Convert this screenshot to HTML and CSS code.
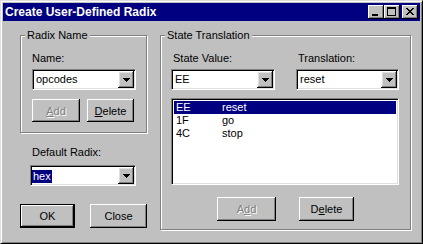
FILE: index.html
```html
<!DOCTYPE html>
<html lang="en">

<head>
    <meta charset="UTF-8">
    <meta name="viewport" content="width=device-width, initial-scale=1.0">
    <title>Create User-Defined Radix</title>
    <link rel="stylesheet" href="styles.css">
</head>

<body>
    <div class="window">
        <div class="titlebar">
            <span class="title">Create User-Defined Radix</span>
            <div class="controls">
                <span class="ctl">
                    <svg width="16" height="14" viewBox="0 0 16 14" shape-rendering="crispEdges"><path d="M4 9h6v2H4z" fill="#000"/></svg>
                </span>
                <span class="ctl">
                    <svg width="16" height="14" viewBox="0 0 16 14" shape-rendering="crispEdges"><path d="M3 2h9v9H3z M4 4v6h7V4z" fill="#000" fill-rule="evenodd"/></svg>
                </span>
                <span class="ctl ctl-close">
                    <svg width="16" height="14" viewBox="0 0 16 14" shape-rendering="crispEdges"><path d="M4 3h2v1H4z M10 3h2v1h-2z M5 4h2v1H5z M9 4h2v1H9z M6 5h4v1H6z M7 6h2v1H7z M6 7h4v1H6z M5 8h2v1H5z M9 8h2v1H9z M4 9h2v1H4z M10 9h2v1h-2z" fill="#000"/></svg>
                </span>
            </div>
        </div>

        <div class="content">
            <div class="left-col">
                <div class="group radix-group">
                    <span class="legend">Radix Name</span>
                    <label class="lbl">Name:</label>
                    <div class="combo name-combo">
                        <span class="combo-text">opcodes</span>
                        <span class="drop"><svg width="7" height="4" viewBox="0 0 7 4" shape-rendering="crispEdges"><path d="M0 0h7v1H0z M1 1h5v1H1z M2 2h3v1H2z M3 3h1v1H3z" fill="#000"/></svg></span>
                    </div>
                    <div class="btn-row">
                        <button class="btn btn-add disabled"><u>A</u>dd</button>
                        <button class="btn btn-del"><u>D</u>elete</button>
                    </div>
                </div>

                <label class="lbl default-lbl">Default Radix:</label>
                <div class="combo hex-combo">
                    <span class="combo-text"><span class="sel">hex</span></span>
                    <span class="drop"><svg width="7" height="4" viewBox="0 0 7 4" shape-rendering="crispEdges"><path d="M0 0h7v1H0z M1 1h5v1H1z M2 2h3v1H2z M3 3h1v1H3z" fill="#000"/></svg></span>
                </div>

                <div class="btn-row main-btns">
                    <button class="btn btn-ok default">OK</button>
                    <button class="btn btn-close">Close</button>
                </div>
            </div>

            <div class="group state-group">
                <span class="legend">State Translation</span>
                <div class="field-row">
                    <div class="field">
                        <label class="lbl">State Value:</label>
                        <div class="combo sv-combo">
                            <span class="combo-text">EE</span>
                            <span class="drop"><svg width="7" height="4" viewBox="0 0 7 4" shape-rendering="crispEdges"><path d="M0 0h7v1H0z M1 1h5v1H1z M2 2h3v1H2z M3 3h1v1H3z" fill="#000"/></svg></span>
                        </div>
                    </div>
                    <div class="field">
                        <label class="lbl">Translation:</label>
                        <div class="combo tr-combo">
                            <span class="combo-text">reset</span>
                            <span class="drop"><svg width="7" height="4" viewBox="0 0 7 4" shape-rendering="crispEdges"><path d="M0 0h7v1H0z M1 1h5v1H1z M2 2h3v1H2z M3 3h1v1H3z" fill="#000"/></svg></span>
                        </div>
                    </div>
                </div>

                <div class="listbox">
                    <div class="row selected"><span class="col1">EE</span><span>reset</span></div>
                    <div class="row"><span class="col1">1F</span><span>go</span></div>
                    <div class="row"><span class="col1">4C</span><span>stop</span></div>
                </div>

                <div class="btn-row state-btns">
                    <button class="btn btn-add2 disabled">A<u>d</u>d</button>
                    <button class="btn btn-del2">D<u>e</u>lete</button>
                </div>
            </div>
        </div>
    </div>
</body>

</html>
```

FILE: styles.css
```css
* {
    box-sizing: border-box;
}

body {
    margin: 0;
    background: #c0c0c0;
    font-family: "Liberation Sans", Arial, sans-serif;
    font-size: 11px;
    color: #000;
}

.window {
    width: 423px;
    height: 244px;
    padding: 2px;
    background: #c0c0c0;
    border: 1px solid;
    border-color: #dfdfdf #000 #000 #dfdfdf;
    box-shadow: inset 1px 1px #fff, inset -1px -1px #808080;
}

/* title bar */
.titlebar {
    display: flex;
    align-items: center;
    height: 18px;
    padding: 0 2px;
    background: #000080;
    color: #fff;
}

.title {
    flex: 1;
    font-size: 12px;
    font-weight: bold;
}

.controls {
    display: flex;
}

.ctl {
    display: block;
    width: 16px;
    height: 14px;
    background: #c0c0c0;
    box-shadow: inset -1px -1px #000, inset 1px 1px #fff, inset -2px -2px #808080;
}

.ctl svg {
    display: block;
}

.ctl-close {
    margin-left: 2px;
}

/* body */
.content {
    display: flex;
    gap: 12px;
    padding: 14px 0 0 17px;
}

.left-col {
    display: flex;
    flex-direction: column;
    width: 128px;
}

.group {
    position: relative;
    display: flex;
    flex-direction: column;
    border: 1px solid #808080;
    box-shadow: inset 1px 1px #fff, 1px 1px #fff;
}

.legend {
    position: absolute;
    top: -7px;
    left: 4px;
    padding: 0 2px;
    line-height: 13px;
    background: #c0c0c0;
}

.lbl {
    display: block;
    line-height: 13px;
}

.radix-group {
    width: 127px;
    height: 98px;
    padding: 16px 0 0 11px;
}

/* combo boxes */
.combo {
    display: flex;
    height: 21px;
    margin-top: 4px;
    padding: 1px;
    background: #fff;
    border: 1px solid;
    border-color: #808080 #fff #fff #808080;
    box-shadow: inset 1px 1px #000, inset -1px -1px #dfdfdf;
}

.combo-text {
    flex: 1;
    padding-left: 2px;
    line-height: 17px;
    white-space: nowrap;
}

.drop {
    display: flex;
    align-items: center;
    justify-content: center;
    width: 16px;
    height: 17px;
    padding-top: 1px;
    background: #c0c0c0;
    box-shadow: inset -1px -1px #000, inset 1px 1px #fff, inset -2px -2px #808080, inset 2px 2px #dfdfdf;
}

.drop svg {
    display: block;
}

.name-combo {
    width: 104px;
}

.sel {
    display: inline-block;
    line-height: 13px;
    padding: 0 1px;
    background: #000080;
    color: #fff;
    vertical-align: middle;
}

/* buttons */
.btn-row {
    display: flex;
    gap: 7px;
    margin-top: 9px;
}

.btn {
    height: 23px;
    padding: 0;
    font: inherit;
    color: #000;
    background: #c0c0c0;
    border: none;
    box-shadow: inset -1px -1px #000, inset 1px 1px #fff, inset -2px -2px #808080;
}

.btn.disabled {
    color: #808080;
    text-shadow: 1px 1px #fff;
}

.btn.default {
    border: 1px solid #000;
}

.btn-add {
    width: 48px;
}

.btn-del {
    width: 47px;
}

.default-lbl {
    margin: 13px 0 0 12px;
}

.hex-combo {
    width: 106px;
    margin: 6px 0 0 10px;
}

.hex-combo .combo-text {
    padding-left: 0;
}

.main-btns {
    gap: 15px;
    margin-top: 18px;
}

.main-btns .btn {
    height: 24px;
}

.btn-ok {
    width: 55px;
}

.btn-close {
    width: 57px;
}

/* state translation */
.state-group {
    width: 251px;
    height: 195px;
    padding: 16px 10px 0 10px;
}

.field-row {
    display: flex;
    gap: 21px;
}

.field .lbl {
    margin-left: 2px;
}

.sv-combo {
    width: 104px;
}

.tr-combo {
    width: 103px;
}

.listbox {
    width: 228px;
    height: 87px;
    margin-top: 8px;
    padding: 2px;
    background: #fff;
    border: 1px solid;
    border-color: #808080 #fff #fff #808080;
    box-shadow: inset 1px 1px #000, inset -1px -1px #dfdfdf;
}

.row {
    display: flex;
    height: 13px;
    line-height: 13px;
    padding-left: 2px;
}

.row.selected {
    background: #000080;
    color: #fff;
}

.col1 {
    width: 46px;
}

.state-btns {
    justify-content: center;
    gap: 23px;
    margin-top: 12px;
}

.state-btns .btn {
    height: 24px;
}

.btn-add2 {
    width: 59px;
}

.btn-del2 {
    width: 55px;
}
```
